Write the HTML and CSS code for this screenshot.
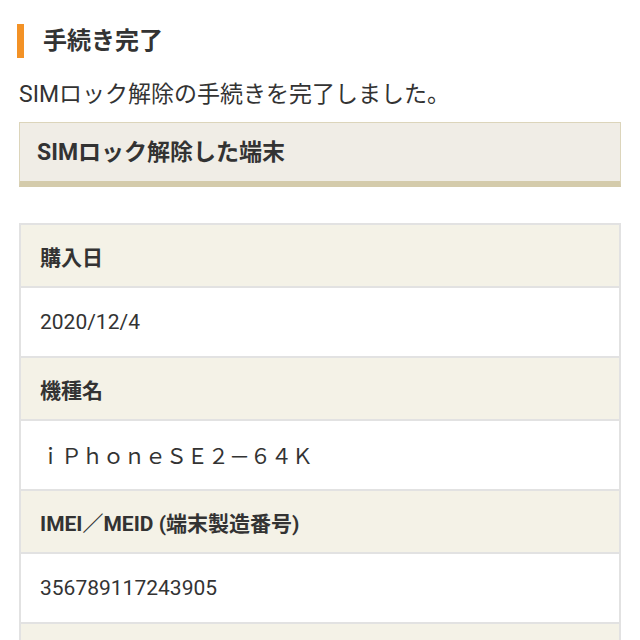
FILE: index.html
```html
<!DOCTYPE html>
<html lang="ja">
<head>
    <meta charset="UTF-8">
    <meta name="viewport" content="width=device-width, initial-scale=1.0">
    <title>手続き完了</title>
    <link rel="stylesheet" href="styles.css">
</head>
<body>
    <div class="page">
        <h2 class="page-title">手続き完了</h2>
        <p class="lead">SIMロック解除の手続きを完了しました。</p>

        <div class="section-head">SIMロック解除した端末</div>

        <div class="info-table">
            <div class="info-label">購入日</div>
            <div class="info-value">2020/12/4</div>
            <div class="info-label">機種名</div>
            <div class="info-value">ｉＰｈｏｎｅＳＥ２－６４Ｋ</div>
            <div class="info-label">IMEI／MEID (端末製造番号)</div>
            <div class="info-value">356789117243905</div>
            <div class="info-label">&nbsp;</div>
        </div>
    </div>
</body>
</html>
```

FILE: styles.css
```css
body {
    margin: 0;
    padding: 0;
    background: #fff;
    color: #333;
    font-family: Roboto, "Noto Sans CJK JP", sans-serif;
}
.page {
    padding: 24px 19px 0;
}
.page-title {
    margin: 0 0 0 -2px;
    padding-left: 19px;
    border-left: 7px solid #f39226;
    font-size: 24px;
    font-weight: bold;
    line-height: 34px;
    color: #333;
}
.lead {
    margin: 22px 0 0;
    font-size: 23px;
    line-height: 30px;
}
.section-head {
    margin-top: 12px;
    padding: 15px 17px 13px;
    background: #f0ede6;
    border: 1px solid #dcd5bb;
    border-bottom: 6px solid #d4cbab;
    font-size: 23px;
    font-weight: bold;
    line-height: 30px;
}
.info-table {
    margin-top: 36px;
    border: 2px solid #e2e2e2;
    border-bottom: none;
}
.info-label,
.info-value {
    padding: 0 19px;
    border-bottom: 2px solid #e2e2e2;
    font-size: 21px;
    display: flex;
    align-items: center;
}
.info-label {
    height: 61px;
    background: #f4f2e7;
    font-weight: bold;
}
.info-value {
    height: 68px;
    background: #fff;
}
```
